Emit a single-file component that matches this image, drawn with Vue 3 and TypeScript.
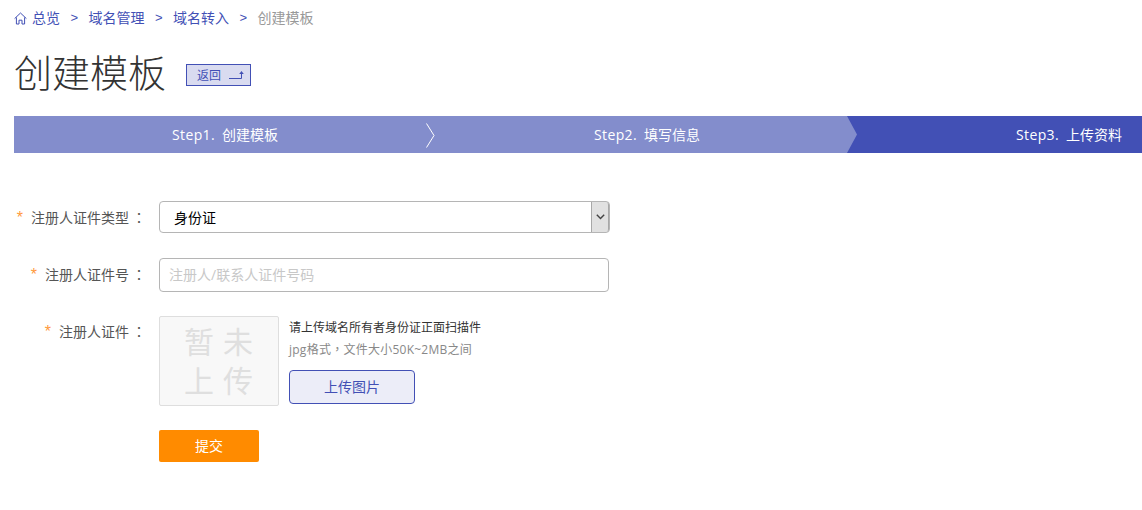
<script setup lang="ts">
const crumbs = ['域名管理', '域名转入']
const steps = [
  { en: 'Step1.', zh: '创建模板', done: true },
  { en: 'Step2.', zh: '填写信息', done: true },
  { en: 'Step3.', zh: '上传资料', done: false },
]
</script>

<template>
  <div class="page">
    <nav class="crumbs">
      <svg class="home" width="13" height="13" viewBox="0 0 13 13" fill="none" stroke="#4250b5" stroke-width="1">
        <path d="M0.6 6.6 6.5 1 12.4 6.6M2.4 5.4V12H5V8.2H8V12H10.6V5.4" />
      </svg>
      <a class="link first">总览</a>
      <template v-for="c in crumbs" :key="c">
        <span class="sep">&gt;</span>
        <a class="link">{{ c }}</a>
      </template>
      <span class="sep">&gt;</span>
      <span class="current">创建模板</span>
    </nav>

    <header class="head">
      <h1>创建模板</h1>
      <button class="back" type="button">
        <span>返回</span>
        <svg width="16" height="10" viewBox="0 0 16 10" fill="none" stroke="#4250b5" stroke-width="1">
          <path d="M0 8.5H12.5V3" />
          <path d="M10.2 4 12.5 1 14.8 4Z" fill="#4250b5" stroke="none" />
        </svg>
      </button>
    </header>

    <div class="steps">
      <div v-for="s in steps" :key="s.en" class="step" :class="{ done: s.done }"><span class="en">{{ s.en }}</span><span class="zh">{{ s.zh }}</span></div>
      <svg class="chev" width="10" height="25" viewBox="0 0 10 25" fill="none" stroke="#fff" stroke-width="1">
        <path d="M0.5 0.5 8 12.5 0.5 24.5" />
      </svg>
      <svg class="notch" width="11" height="37" viewBox="0 0 11 37">
        <path d="M0 0H11V37H0L10 18.5Z" fill="#4250b5" />
      </svg>
    </div>

    <form class="form" @submit.prevent>
      <div class="row r1">
        <label><i>*</i>注册人证件类型<b>：</b></label>
        <div class="select-wrap">
          <select class="select">
            <option>身份证</option>
          </select>
          <span class="arrow">
            <svg width="9" height="6" viewBox="0 0 9 6" fill="none" stroke="#444" stroke-width="1.4">
              <path d="M0.8 0.8 4.5 4.6 8.2 0.8" />
            </svg>
          </span>
        </div>
      </div>
      <div class="row r2">
        <label><i>*</i>注册人证件号<b>：</b></label>
        <input class="input" placeholder="注册人/联系人证件号码" />
      </div>
      <div class="row r3">
        <label><i>*</i>注册人证件<b>：</b></label>
        <div class="preview">暂未上传</div>
        <div class="upload">
          <p class="tip">请上传域名所有者身份证正面扫描件</p>
          <p class="hint">jpg格式<b>，</b>文件大小50K~2MB之间</p>
          <button class="up-btn" type="button">上传图片</button>
        </div>
      </div>
      <div class="row r4">
        <button class="submit" type="submit">提交</button>
      </div>
    </form>
  </div>
</template>

<style>
html, body { margin: 0; background: #fff; }
</style>

<style scoped>
.page {
  width: 1142px;
  height: 510px;
  overflow: hidden;
  padding-left: 14px;
  box-sizing: border-box;
  font-family: "Open Sans", "Noto Sans CJK SC", sans-serif;
  font-size: 14px;
  color: #333;
}
.crumbs {
  display: flex;
  align-items: center;
  height: 20px;
  padding-top: 8px;
  line-height: 20px;
  color: #4250b5;
}
.home { margin-right: 5px; }
.link { color: #4250b5; }
.sep { width: 28.5px; text-align: center; font-family: "Liberation Sans", sans-serif; font-size: 13px; }
.current { color: #999; }
.head {
  display: flex;
  align-items: center;
  height: 60px;
  margin-top: 14px;
}
h1 {
  margin: 0;
  font-size: 38px;
  font-weight: 300;
  line-height: 60px;
  color: #333;
}
.back {
  display: flex;
  align-items: center;
  justify-content: space-between;
  width: 65px;
  height: 22px;
  margin: 6px 0 0 20px;
  padding: 0 5px 0 10px;
  box-sizing: border-box;
  background: #d9dbf0;
  border: 1px solid #4250b5;
  color: #4250b5;
  font: inherit;
  font-size: 12px;
}
.steps {
  position: relative;
  display: flex;
  height: 37px;
  margin-top: 14px;
  overflow: hidden;
}
.step {
  flex: 0 0 422px;
  display: flex;
  justify-content: center;
  gap: 7px;
  line-height: 37px;
  color: #fff;
  background: #4250b5;
}
.step .en { letter-spacing: 0.35px; }
.step.done { background: #838dcc; }
.chev { position: absolute; left: 412px; top: 7px; }
.notch { position: absolute; left: 833px; top: 0; }
.form { padding-top: 48px; }
.row {
  display: flex;
  align-items: flex-start;
}
label {
  flex: 0 0 132px;
  margin-right: 13px;
  text-align: right;
  line-height: 32px;
  color: #555;
  white-space: nowrap;
}
label i {
  font-family: "Liberation Sans", sans-serif;
  font-size: 16px;
  font-style: normal;
  color: #ff9a3c;
  margin-right: 8px;
}
label b, .hint b {
  font-family: "Noto Sans CJK TC", sans-serif;
  font-weight: 400;
}
label b { margin-left: 3px; }
.select-wrap {
  position: relative;
  width: 451px;
  height: 32px;
}
.select {
  appearance: none;
  display: block;
  width: 100%;
  height: 100%;
  padding: 0 0 0 14px;
  box-sizing: border-box;
  background: #fff;
  border: 1px solid #b5b5b5;
  border-radius: 4px;
  color: #000;
  font: inherit;
}
.arrow {
  position: absolute;
  right: 1px;
  top: 1px;
  bottom: 1px;
  width: 16px;
  display: flex;
  align-items: center;
  justify-content: center;
  background: #e1e1e1;
  border-left: 1px solid #a8a8a8;
  border-right: 1px solid #a8a8a8;
  border-radius: 0 3px 3px 0;
  pointer-events: none;
}
.r2 { margin-top: 24px; }
.input {
  width: 450px;
  height: 34px;
  padding: 0 9px 2px;
  box-sizing: border-box;
  border: 1px solid #b5b5b5;
  border-radius: 4px;
  font: inherit;
  outline: none;
}
.input::placeholder { color: #c8c8c8; }
.r3 { margin-top: 24px; }
.r3 label { line-height: 30px; }
.preview {
  flex: 0 0 auto;
  width: 120px;
  height: 90px;
  padding: 5px 0 0 24px;
  box-sizing: border-box;
  background: #f8f8f8;
  border: 1px solid #dedede;
  border-radius: 2px;
  color: #dfdfdf;
  font-size: 30px;
  line-height: 39px;
  letter-spacing: 9px;
  word-break: break-all;
  overflow: hidden;
}
.upload { margin-left: 10px; padding-top: 2px; }
.tip, .hint { margin: 0; font-size: 12px; }
.tip { line-height: 20px; color: #333; }
.hint { line-height: 20px; margin-top: 1px; color: #888; letter-spacing: 0.25px; }
.up-btn {
  display: block;
  width: 126px;
  height: 34px;
  margin-top: 10px;
  padding: 0 0 2px;
  background: #ecedf8;
  border: 1px solid #4250b5;
  border-radius: 4px;
  color: #4250b5;
  font: inherit;
}
.r4 { margin-top: 24px; padding-left: 145px; }
.submit {
  width: 100px;
  height: 32px;
  padding: 0 0 2px;
  background: #ff8b00;
  border: 0;
  border-radius: 2px;
  color: #fff;
  font: inherit;
}
</style>
